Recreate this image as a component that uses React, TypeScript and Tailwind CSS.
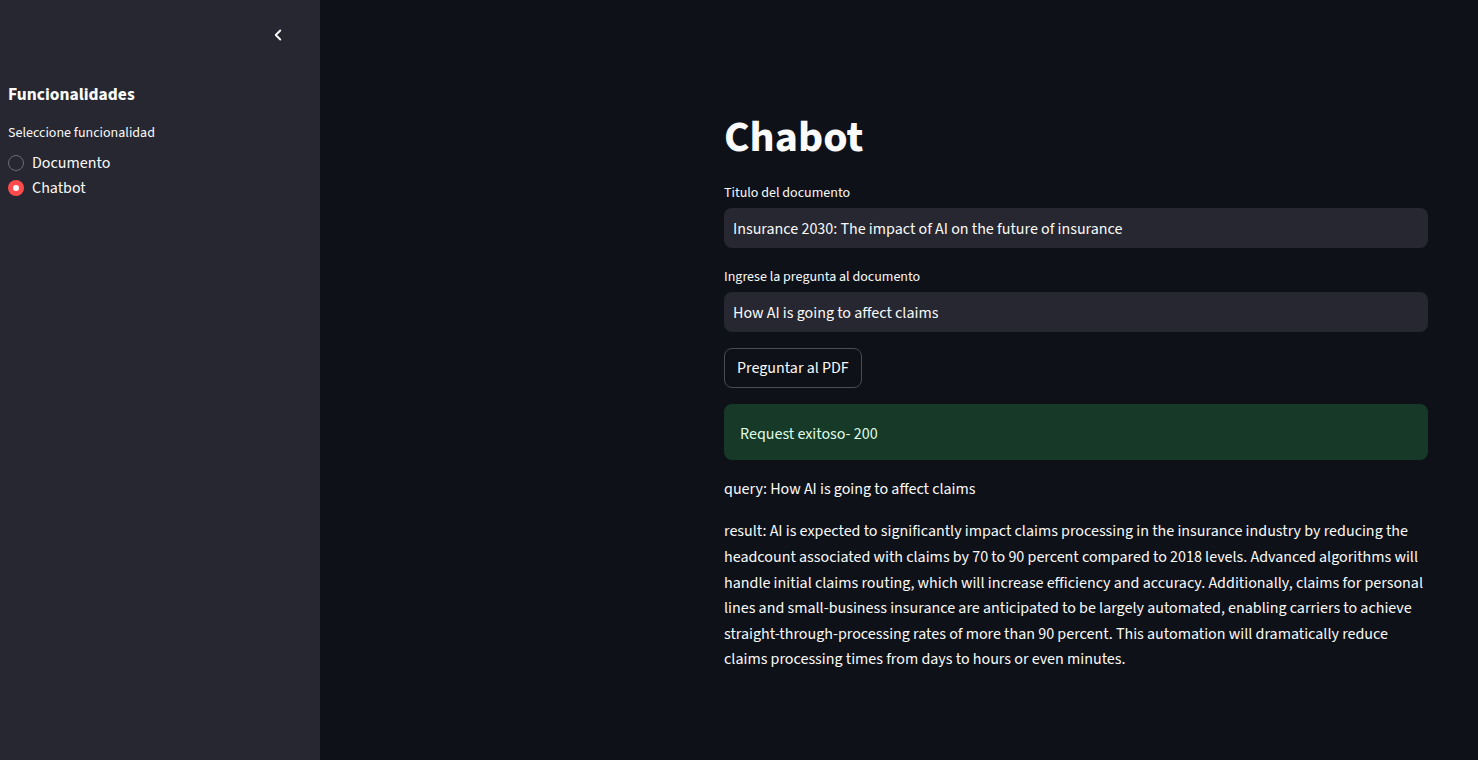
import React from 'react'
import { ChevronLeft } from 'lucide-react'

const font = { fontFamily: '"Source Sans Pro", "Source Sans 3", Lato, "Liberation Sans", sans-serif' }

const Sidebar: React.FC = () => {
  return (
    <aside className="w-[320px] shrink-0 bg-[#262730] min-h-screen px-2 pt-[26px]">
      <div className="flex justify-end pr-[34px]">
        <ChevronLeft size={18} strokeWidth={2.5} className="text-[#fafafa] translate-x-[9px]" />
      </div>
      <h2 className="mt-[39px] text-[17.5px] leading-[24px] font-bold text-[#fafafa]">Funcionalidades</h2>
      <div className="mt-[16px] text-[14px] leading-[20px] text-[#fafafa]">Seleccione funcionalidad</div>
      <div className="mt-[10px] flex flex-col gap-[5px]">
        <label className="flex items-center gap-2 h-[20px]">
          <span className="w-4 h-4 rounded-full border border-[#6b6c75] bg-[#262730]" />
          <span className="text-[16px] text-[#fafafa]">Documento</span>
        </label>
        <label className="flex items-center gap-2 h-[20px]">
          <span className="w-4 h-4 rounded-full bg-[#ff4b4b] flex items-center justify-center">
            <span className="w-[6px] h-[6px] rounded-full bg-[#fafafa]" />
          </span>
          <span className="text-[16px] text-[#fafafa]">Chatbot</span>
        </label>
      </div>
    </aside>
  )
}

const App: React.FC = () => {
  return (
    <div className="flex min-h-screen bg-[#0e1117] text-[#fafafa]" style={font}>
      <Sidebar />
      <main className="flex-1 pl-[404px] pr-[50px] pt-[112px]">
        <h1 className="text-[44px] font-bold leading-[1.2]">Chabot</h1>

        <div className="mt-[19px] text-[14px] leading-[18px]">Titulo del documento</div>
        <div className="mt-[6px] h-10 rounded-lg bg-[#262730] flex items-center px-[9px] pt-[2px] text-[16px]">
          Insurance 2030: The impact of AI on the future of insurance
        </div>

        <div className="mt-[20px] text-[14px] leading-[18px]">Ingrese la pregunta al documento</div>
        <div className="mt-[6px] h-10 rounded-lg bg-[#262730] flex items-center px-[9px] pt-[2px] text-[16px]">
          How AI is going to affect claims
        </div>

        <button className="mt-4 h-10 px-3 rounded-lg border border-[#4a4b53] bg-[#0e1117] text-[16px] text-[#fafafa]">
          Preguntar al PDF
        </button>

        <div className="mt-4 h-14 rounded-lg bg-[#173928] flex items-center px-4 pt-[4px] text-[16px] text-[#dffde9]">
          Request exitoso- 200
        </div>

        <p className="mt-[17px] text-[16px] leading-[25.6px]">query: How AI is going to affect claims</p>
        <p className="mt-[17px] text-[16px] leading-[25.6px]">
          result: AI is expected to significantly impact claims processing in the insurance industry by reducing the headcount associated with claims by 70 to 90 percent compared to 2018 levels. Advanced algorithms will handle initial claims routing, which will increase efficiency and accuracy. Additionally, claims for personal lines and small-business insurance are anticipated to be largely automated, enabling carriers to achieve straight-through-processing rates of more than 90 percent. This automation will dramatically reduce claims processing times from days to hours or even minutes.
        </p>
      </main>
    </div>
  )
}

export default App
